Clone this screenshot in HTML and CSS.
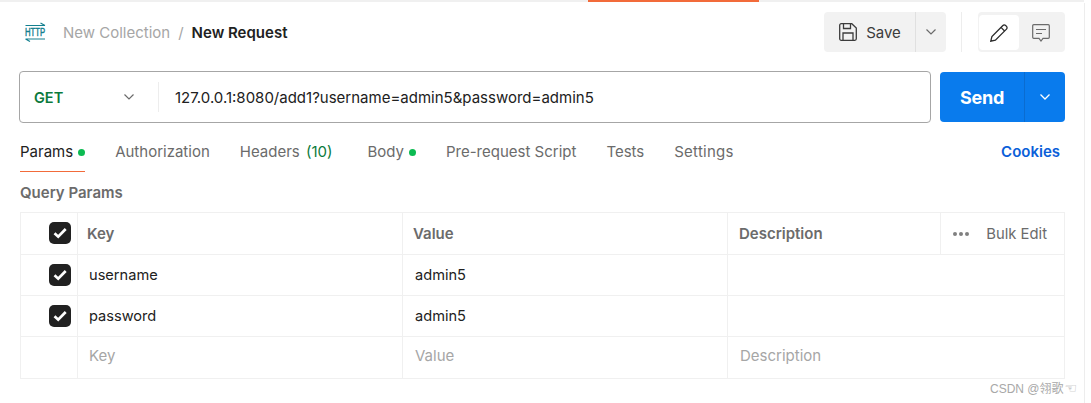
FILE: index.html
```html
<!DOCTYPE html>
<html lang="en">
<head>
<meta charset="utf-8">
<title>New Request</title>
<link rel="stylesheet" href="styles.css">
</head>
<body>
<div class="topline"><span class="topline-a"></span><span class="topline-b"></span></div>
<main class="app">
  <header class="head">
    <div class="crumbs">
      <svg class="http" width="22" height="20" viewBox="0 0 22 20" fill="none" stroke="#14808f" stroke-width="1.200"><path d="M1.500 3.500H21M16.500 1 21 3.500"/><path d="M1.500 17H21M1.500 17l4.500 2.500"/><text class="http-text" transform="translate(1 14.300) scale(.7 1)" stroke-width=".45">HTTP</text></svg>
      <span class="crumb-parent">New Collection</span>
      <span class="crumb-sep">/</span>
      <span class="crumb-name">New Request</span>
    </div>
    <div class="actions">
      <div class="save">
        <button class="save-main">
          <svg width="18" height="18" viewBox="0 0 18 18" fill="none" stroke="#3c3c3c" stroke-width="1.300"><path d="M.7 2.200A1.500 1.500 0 0 1 2.200.7h10.600l4.500 4.300v10.800a1.500 1.500 0 0 1-1.500 1.500H2.200a1.500 1.500 0 0 1-1.500-1.500z"/><path d="M4.500.7v4.800h7V.7M4 17.300v-7.300h10v7.300"/></svg>
          <span>Save</span>
        </button>
        <button class="save-more"><svg width="12" height="8" viewBox="0 0 12 8" fill="none" stroke="#6b6b6b" stroke-width="1.200"><path d="M1.500 1.500 6 6l4.500-4.500"/></svg></button>
      </div>
      <div class="vrule"></div>
      <div class="toggle">
        <button class="toggle-on"><svg width="18" height="18" viewBox="0 0 18 18" fill="none" stroke="#2b2b2b" stroke-width="1.300"><path d="M.8 17.200l1.100-4.600L12.900 1.500a1.900 1.900 0 0 1 2.700 0l.9.9a1.900 1.900 0 0 1 0 2.700L5.400 16.100z"/><path d="M11 3.400l3.600 3.600"/></svg></button>
        <button class="toggle-off"><svg width="18" height="18" viewBox="0 0 18 18" fill="none" stroke="#6b6b6b" stroke-width="1.200"><path d="M.7 1.700a1 1 0 0 1 1-1h14.600a1 1 0 0 1 1 1v11.600a1 1 0 0 1-1 1h-5.300L9 17l-2-2.700H1.700a1 1 0 0 1-1-1z"/><path d="M4 5.500h10M4 9.500h6"/></svg></button>
      </div>
    </div>
  </header>

  <section class="urlbar">
    <div class="url-box">
      <div class="method"><span>GET</span><svg width="12" height="8" viewBox="0 0 12 8" fill="none" stroke="#6b6b6b" stroke-width="1.200"><path d="M1.500 1.500 6 6l4.500-4.500"/></svg></div>
      <div class="url-text">127.0.0.1:8080/add1?username=admin5&amp;password=admin5</div>
    </div>
    <div class="send">
      <button class="send-main">Send</button>
      <button class="send-more"><svg width="12" height="8" viewBox="0 0 12 8" fill="none" stroke="#fff" stroke-width="1.300"><path d="M1.500 1.500 6 6l4.500-4.500"/></svg></button>
    </div>
  </section>

  <nav class="tabs">
    <a class="tab tab-active">Params<i class="dot"></i></a>
    <a class="tab">Authorization</a>
    <a class="tab tab-headers">Headers <em class="count">(10)</em></a>
    <a class="tab">Body<i class="dot"></i></a>
    <a class="tab">Pre-request Script</a>
    <a class="tab">Tests</a>
    <a class="tab tab-settings">Settings</a>
    <a class="cookies">Cookies</a>
  </nav>

  <h2 class="section-title">Query Params</h2>

  <div class="table">
    <div class="row row-head">
      <div class="cell cell-check"><span class="check"><svg width="14" height="12" viewBox="0 0 14 12" fill="none" stroke="#fff" stroke-width="2.700"><path d="M1.500 6.300 5.200 9.700 12.700 2"/></svg></span></div>
      <div class="cell cell-key">Key</div>
      <div class="cell cell-value">Value</div>
      <div class="cell cell-desc">Description</div>
      <div class="cell cell-tools"><span class="dots"><i></i><i></i><i></i></span><span class="bulk">Bulk Edit</span></div>
    </div>
    <div class="row">
      <div class="cell cell-check"><span class="check"><svg width="14" height="12" viewBox="0 0 14 12" fill="none" stroke="#fff" stroke-width="2.700"><path d="M1.500 6.300 5.200 9.700 12.700 2"/></svg></span></div>
      <div class="cell cell-key">username</div>
      <div class="cell cell-value">admin5</div>
      <div class="cell cell-desc"></div>
    </div>
    <div class="row">
      <div class="cell cell-check"><span class="check"><svg width="14" height="12" viewBox="0 0 14 12" fill="none" stroke="#fff" stroke-width="2.700"><path d="M1.500 6.300 5.200 9.700 12.700 2"/></svg></span></div>
      <div class="cell cell-key">password</div>
      <div class="cell cell-value">admin5</div>
      <div class="cell cell-desc"></div>
    </div>
    <div class="row row-empty">
      <div class="cell cell-check"></div>
      <div class="cell cell-key">Key</div>
      <div class="cell cell-value">Value</div>
      <div class="cell cell-desc">Description</div>
    </div>
  </div>
</main>
<div class="watermark">CSDN @翎歌<span class="hand">☜</span></div>
</body>
</html>
```
FILE: styles.css
```css
* { box-sizing: border-box; }
html, body { margin: 0; height: 403px; overflow: hidden; background: #fff; }
body { font-family: Inter, "Noto Sans CJK SC", sans-serif; font-size: 15px; color: #212121; position: relative; }
button { font: inherit; border: 0; padding: 0; background: none; color: inherit; display: flex; align-items: center; justify-content: center; }

.topline { height: 3px; width: 1084px; display: flex; align-items: flex-start; }
.topline-a { width: 588px; height: 2px; background: #f0f0f0; }
.topline-b { width: 171px; height: 2px; background: #f26b3a; }
.topline::after { content: ""; flex: 1; height: 2px; background: #f0f0f0; }

.app { width: 1085px; height: 400px; padding: 0 19px; border-right: 1px solid #ededed; }

.head { display: flex; align-items: center; justify-content: space-between; height: 58px; margin-bottom: 10px; }
.crumbs { display: flex; align-items: center; margin-left: 5px; }
.http { margin-right: 17px; }
.http-text { font-family: "Liberation Sans", sans-serif; font-size: 11px; fill: #14808f; }
.crumb-parent { color: #a6a6a6; }
.crumb-sep { color: #a6a6a6; margin: 0 8px; }
.crumb-name { font-weight: 600; color: #212121; }

.actions { display: flex; align-items: center; }
.save { display: flex; height: 40px; background: #f2f2f2; border-radius: 4px; }
.save-main { width: 92px; gap: 9px; padding-left: 1px; color: #3c3c3c; border-right: 1px solid #e0e0e0; }
.save-more { width: 30px; }
.vrule { width: 1px; height: 40px; background: #ededed; margin: 0 16px 0 15px; }
.toggle { display: flex; width: 87px; height: 40px; background: #f2f2f2; border-radius: 4px; padding: 3px 0 2px 1px; }
.toggle-on { width: 40px; height: 35px; background: #fff; border-radius: 4px; }
.toggle-off { flex: 1; padding-right: 2px; }

.urlbar { display: flex; gap: 9px; height: 52px; }
.url-box { flex: 1; display: flex; align-items: center; border: 1px solid #a6a6a6; border-radius: 4px; height: 52px; }
.method { width: 139px; height: 30px; display: flex; align-items: center; justify-content: space-between; padding: 0 23px 0 14px; border-right: 1px solid #ededed; font-weight: 600; font-size: 14.500px; color: #0b7a3c; }
.url-text { padding-left: 16px; color: #212121; }
.send { display: flex; width: 125px; height: 50px; margin-top: 1px; background: #097bed; border-radius: 4px; color: #fff; }
.send-main { width: 85px; font-size: 18px; font-weight: 700; border-right: 1px solid #0a6cd0; letter-spacing: -0.3px; }
.send-more { flex: 1; }

.tabs { display: flex; align-items: flex-start; height: 49px; padding: 19px 5px 0 1px; }
.tab { height: 30px; color: #6b6b6b; margin-right: 30px; display: flex; line-height: 20px; white-space: pre; }
.tab-active { color: #212121; border-bottom: 1px solid #f26b3a; }
.tab-headers { margin-right: 35px; }
.tab-settings { letter-spacing: .25px; }
.dot { width: 7px; height: 7px; border-radius: 50%; background: #0cbb52; margin: 7px 0 0 5px; }
.count { font-style: normal; color: #0b7a3c; margin-left: 2px; }
.cookies { margin-left: auto; font-weight: 600; color: #0b5fd9; line-height: 20px; }

.section-title { margin: 0 0 0 1px; font-size: 15px; font-weight: 600; color: #6b6b6b; height: 40px; padding-top: 11px; line-height: 20px; }

.table { width: 1045px; margin-left: 1px; border: 1px solid #f0f0f0; font-size: 14.600px; }
.row { display: grid; grid-template-columns: 57px 325px 325px 1fr; height: 41px; border-bottom: 1px solid #f0f0f0; }
.row-head { grid-template-columns: 57px 325px 325px 213px 1fr; height: 42px; font-weight: 600; font-size: 15px; color: #6b6b6b; }
.row-empty { border-bottom: 0; color: #a6a6a6; height: 41px; font-size: 15px; }
.cell { display: flex; align-items: center; padding-left: 12px; padding-bottom: 1px; border-right: 1px solid #f0f0f0; }
.cell:last-child { border-right: 0; }
.row-empty .cell { padding-bottom: 4px; }
.cell-key { padding-left: 11px; }
.row-head .cell-key { padding-left: 9px; }
.row-head .cell-value { padding-left: 10px; }
.row-head .cell-desc { padding-left: 11px; }
.cell-check { justify-content: flex-end; padding: 0 6px 1px 0; }
.check { width: 22px; height: 22px; border-radius: 5px; background: #212121; display: flex; align-items: center; justify-content: center; }
.row-head .cell-tools { justify-content: space-between; padding: 0 17px 0 12px; font-weight: 400; font-size: 14.800px; }
.dots { display: flex; gap: 2px; }
.dots i { width: 4px; height: 4px; border-radius: 50%; background: #808080; }
.bulk { color: #6b6b6b; }

.watermark { position: absolute; left: 990px; top: 379px; font-family: "Liberation Sans", "Noto Sans CJK SC", sans-serif; font-size: 12px; color: #a8a8a8; white-space: nowrap; }
.hand { font-size: 14px; line-height: 12px; margin-left: 1px; font-family: "DejaVu Sans", sans-serif; }
```
